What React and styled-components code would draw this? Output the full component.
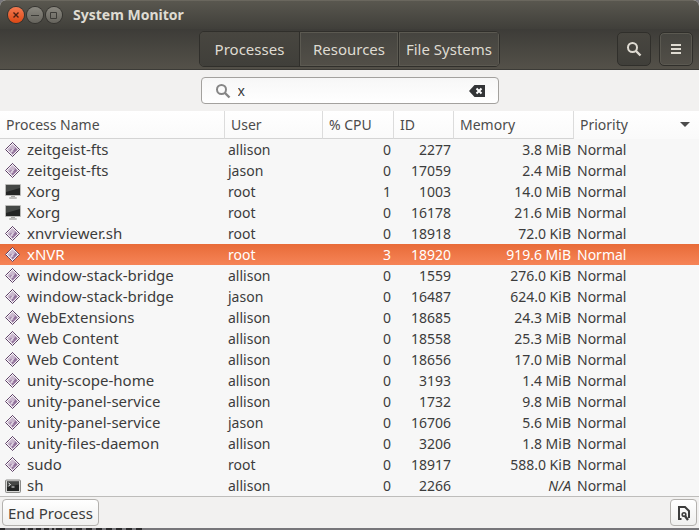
import { useState } from 'react';
import styled, { createGlobalStyle } from 'styled-components';

const processes = [
    { name: 'zeitgeist-fts', user: 'allison', cpu: 0, id: 2277, memory: '3.8 MiB' },
    { name: 'zeitgeist-fts', user: 'jason', cpu: 0, id: 17059, memory: '2.4 MiB' },
    { name: 'Xorg', user: 'root', cpu: 1, id: 1003, memory: '14.0 MiB', icon: 'display' },
    { name: 'Xorg', user: 'root', cpu: 0, id: 16178, memory: '21.6 MiB', icon: 'display' },
    { name: 'xnvrviewer.sh', user: 'root', cpu: 0, id: 18918, memory: '72.0 KiB' },
    { name: 'xNVR', user: 'root', cpu: 3, id: 18920, memory: '919.6 MiB' },
    { name: 'window-stack-bridge', user: 'allison', cpu: 0, id: 1559, memory: '276.0 KiB' },
    { name: 'window-stack-bridge', user: 'jason', cpu: 0, id: 16487, memory: '624.0 KiB' },
    { name: 'WebExtensions', user: 'allison', cpu: 0, id: 18685, memory: '24.3 MiB' },
    { name: 'Web Content', user: 'allison', cpu: 0, id: 18558, memory: '25.3 MiB' },
    { name: 'Web Content', user: 'allison', cpu: 0, id: 18656, memory: '17.0 MiB' },
    { name: 'unity-scope-home', user: 'allison', cpu: 0, id: 3193, memory: '1.4 MiB' },
    { name: 'unity-panel-service', user: 'allison', cpu: 0, id: 1732, memory: '9.8 MiB' },
    { name: 'unity-panel-service', user: 'jason', cpu: 0, id: 16706, memory: '5.6 MiB' },
    { name: 'unity-files-daemon', user: 'allison', cpu: 0, id: 3206, memory: '1.8 MiB' },
    { name: 'sudo', user: 'root', cpu: 0, id: 18917, memory: '588.0 KiB' },
    { name: 'sh', user: 'allison', cpu: 0, id: 2266, memory: null, icon: 'terminal' },
];

const tabs = ['Processes', 'Resources', 'File Systems'];

const SearchIcon = () => (
    <svg width="16" height="16" viewBox="0 0 16 16" fill="none" stroke="currentColor" aria-hidden="true">
        <circle cx="6.5" cy="6.5" r="4.5" strokeWidth="2" />
        <path d="M10 10l4.5 4.5" strokeWidth="2.4" />
    </svg>
);

const ProcessIcon = ({ type }) => {
    if (type === 'display') {
        return (
            <svg width="16" height="16" viewBox="0 0 16 16" aria-hidden="true">
                <rect x="0" y="0" width="16" height="12" rx="1" fill="#b9b9b7" />
                <rect x="1" y="1" width="14" height="10" fill="#242625" />
                <path d="M1 1h14v3L1 8z" fill="#454846" />
                <path d="M6 12h4v2H6z" fill="#a8a8a6" />
                <rect x="4" y="13" width="8" height="2" rx="1" fill="#c0c0be" />
            </svg>
        );
    }
    if (type === 'terminal') {
        return (
            <svg width="16" height="16" viewBox="0 0 16 16" aria-hidden="true">
                <rect x="0.5" y="2" width="15" height="12.5" rx="1" fill="#d6d6d4" stroke="#8a8a88" />
                <rect x="2" y="3.5" width="12" height="9.5" fill="#232524" />
                <path d="M2 3.5h12v3L2 9z" fill="#454745" />
                <path d="M3.5 5l2 1.5-2 1.5M6.5 9h3" fill="none" stroke="#f2f2f2" />
            </svg>
        );
    }
    return (
        <svg width="16" height="16" viewBox="0 0 16 16" aria-hidden="true">
            <path d="M7.5 0.5L14.5 7.5 7.5 14.5 0.5 7.5z" fill="#fff" stroke="#84668c" />
            <path d="M7.5 0.5L14.5 7.5 7.5 14.5 0.5 7.5z" fill="none" stroke="#41254a" strokeDasharray="1 1" />
            <path d="M7.5 2L13 7.5 7.5 13 2 7.5z" fill="#cbb9cf" />
            <path d="M9.5 4.5l3 3-5 5-1-2 2-1-.5-2z" fill="#94749d" />
            <path d="M4 8.5l2-2 1 1-1 2.5z" fill="#a88fb0" />
            <path d="M6 10l1-2 1.5-.5 1-2" fill="none" stroke="#e6dbe9" />
        </svg>
    );
};

const App = () => {
    const [tab, setTab] = useState('Processes');
    const [query, setQuery] = useState('x');
    const [selected, setSelected] = useState(18920);

    return (
        <>
            <GlobalStyle />
            <Window>
                <TitleBar>
                    <WindowButton $close aria-label="Close">
                        <svg width="16" height="16" viewBox="0 0 16 16"><path d="M5.5 5.5l5 5m0-5l-5 5" strokeWidth="1.4" /></svg>
                    </WindowButton>
                    <WindowButton aria-label="Minimize">
                        <svg width="16" height="16" viewBox="0 0 16 16"><path d="M4 8.5h8" /></svg>
                    </WindowButton>
                    <WindowButton aria-label="Maximize">
                        <svg width="16" height="16" viewBox="0 0 16 16"><path d="M4.5 5.5h6v6h-6z" /></svg>
                    </WindowButton>
                    <Title>System Monitor</Title>
                </TitleBar>
                <Toolbar>
                    <Tabs role="tablist">
                        {tabs.map((name) => (
                            <Tab key={name} role="tab" aria-selected={tab === name} $active={tab === name} onClick={() => setTab(name)}>
                                {name}
                            </Tab>
                        ))}
                    </Tabs>
                    <Actions>
                        <ToolButton $active aria-label="Search">
                            <SearchIcon />
                        </ToolButton>
                        <ToolButton aria-label="Menu">
                            <svg width="16" height="16" viewBox="0 0 16 16" fill="currentColor">
                                <path d="M3 3h10v2H3zM3 7h10v2H3zM3 11h10v2H3z" />
                            </svg>
                        </ToolButton>
                    </Actions>
                </Toolbar>
                <SearchBar>
                    <SearchField>
                        <SearchIcon />
                        <SearchInput aria-label="Search processes" value={query} onChange={(e) => setQuery(e.target.value)} />
                        <ClearButton aria-label="Clear" onClick={() => setQuery('')}>
                            <svg width="16" height="12" viewBox="0 0 16 12">
                                <path d="M0 6l5.5-6H16v12H5.5z" fill="#333537" />
                                <path d="M7.5 3.5l5 5m0-5l-5 5" stroke="#fff" strokeWidth="2" />
                            </svg>
                        </ClearButton>
                    </SearchField>
                </SearchBar>
                <Content>
                    <Table>
                        <colgroup>
                            <Col $width={225} />
                            <Col $width={98} />
                            <Col $width={71} />
                            <Col $width={60} />
                            <Col $width={120} />
                            <Col />
                        </colgroup>
                        <thead>
                            <tr>
                                <HeadCell>Process Name</HeadCell>
                                <HeadCell>User</HeadCell>
                                <HeadCell>% CPU</HeadCell>
                                <HeadCell>ID</HeadCell>
                                <HeadCell>Memory</HeadCell>
                                <HeadCell aria-sort="descending">
                                    <SortLabel>
                                        Priority
                                        <svg width="10" height="5" viewBox="0 0 10 5" fill="currentColor" aria-hidden="true"><path d="M0 0h10L5 5z" /></svg>
                                    </SortLabel>
                                </HeadCell>
                            </tr>
                        </thead>
                        <tbody>
                            {processes.map((p) => (
                                <Row key={p.id} $selected={p.id === selected} onClick={() => setSelected(p.id)}>
                                    <Cell>
                                        <ProcessName>
                                            <ProcessIcon type={p.icon} />
                                            {p.name}
                                        </ProcessName>
                                    </Cell>
                                    <Cell>{p.user}</Cell>
                                    <Cell $right>{p.cpu}</Cell>
                                    <Cell $right>{p.id}</Cell>
                                    <Cell $right>{p.memory || <em>N/A</em>}</Cell>
                                    <Cell>Normal</Cell>
                                </Row>
                            ))}
                        </tbody>
                    </Table>
                </Content>
                <Footer>
                    <FooterButton>End Process</FooterButton>
                    <FooterButton $icon aria-label="Process Properties">
                        <svg width="14" height="16" viewBox="0 0 14 16" fill="none" stroke="#3c3c3c" strokeWidth="2">
                            <path d="M4.5 14H2V2h6l4 4v7" />
                            <circle cx="7" cy="9.5" r="1.8" strokeWidth="1.6" />
                            <path d="M8 11l3 4" strokeWidth="2.4" />
                        </svg>
                    </FooterButton>
                </Footer>
            </Window>
            <Backdrop>
                <svg width="144" height="2" viewBox="0 0 144 2" stroke="#2b2a2c" strokeWidth="2" aria-hidden="true">
                    <path d="M0 1h6M20 1h34" strokeDasharray="5 3" />
                    <path d="M56 1h86" strokeDasharray="6 4" />
                </svg>
            </Backdrop>
        </>
    );
};

export default App;

const GlobalStyle = createGlobalStyle`
    * {
        box-sizing: border-box;
    }
    body {
        margin: 0;
        background: #77767a;
    }
    body, button, input {
        font-family: 'Noto Sans', 'Open Sans', sans-serif;
        font-size: 14px;
        line-height: 20px;
        color: #3c3c3c;
    }
    button {
        margin: 0;
        padding: 0;
    }
    svg {
        display: block;
        flex-shrink: 0;
    }
`;

const Window = styled.div`
    display: flex;
    flex-direction: column;
    background: #f2f1f0;
    border-radius: 6px 6px 0 0;
    overflow: hidden;
`;

const TitleBar = styled.div`
    display: flex;
    align-items: center;
    gap: 3px;
    height: 29px;
    padding: 0 8px;
    border-top: 1px solid #6a675e;
    background: linear-gradient(#59574f, #403f3a);
`;

const WindowButton = styled.button`
    display: flex;
    align-items: center;
    justify-content: center;
    width: 16px;
    height: 16px;
    border: none;
    border-radius: 50%;
    background: ${props => props.$close ? 'linear-gradient(#f37a51, #dd4814)' : 'linear-gradient(#8a8880, #66645d)'};
    box-shadow: 0 0 0 1px #34332f;
    svg {
        fill: none;
        stroke: ${props => props.$close ? '#4a2013' : '#3c3b37'};
    }
`;

const Title = styled.span`
    margin-left: 8px;
    font-weight: bold;
    color: #dfdbd2;
`;

const Toolbar = styled.div`
    display: grid;
    grid-template-columns: 1fr auto 1fr;
    align-items: center;
    height: 41px;
    padding: 0 6px;
    border-bottom: 1px solid #3c3b37;
    background: linear-gradient(#3d3c38, #545149);
`;

const Tabs = styled.div`
    display: flex;
    grid-column: 2;
    border: 1px solid #302f2b;
    border-radius: 5px;
    overflow: hidden;
`;

const Tab = styled.button`
    min-width: 99px;
    height: 34px;
    padding: 0 7px;
    border: none;
    font-size: 15px;
    color: #dfdbd2;
    background: ${props => props.$active ? 'linear-gradient(#484640, #403f3a)' : 'linear-gradient(#45443f, #524f48)'};
    box-shadow: ${props => props.$active ? 'none' : 'inset 0 0 0 1px #5b5951'};
    & + & {
        border-left: 1px solid #302f2b;
    }
`;

const Actions = styled.div`
    display: flex;
    grid-column: 3;
    justify-content: flex-end;
    gap: 8px;
`;

const ToolButton = styled.button`
    display: flex;
    align-items: center;
    justify-content: center;
    width: 34px;
    height: 34px;
    border: 1px solid #302f2b;
    border-radius: 5px;
    color: #dfdbd2;
    background: ${props => props.$active ? 'linear-gradient(#484640, #403f3a)' : 'linear-gradient(#45443f, #524f48)'};
    box-shadow: ${props => props.$active ? 'none' : 'inset 0 0 0 1px #5b5951'};
`;

const SearchBar = styled.div`
    display: flex;
    justify-content: center;
    padding: 7px;
`;

const SearchField = styled.div`
    display: flex;
    align-items: center;
    gap: 7px;
    width: 298px;
    height: 27px;
    padding: 0 13px;
    border: 1px solid #a3a19e;
    border-radius: 4px;
    background: linear-gradient(#f7f7f7, #fff);
    color: #868686;
`;

const SearchInput = styled.input`
    flex: 1;
    min-width: 0;
    padding: 0;
    border: none;
    outline: none;
    background: none;
`;

const ClearButton = styled.button`
    border: none;
    background: none;
`;

const Content = styled.div`
    background: #f7f7f7;
    border-bottom: 1px solid #bebdbb;
`;

const Table = styled.table`
    width: 100%;
    table-layout: fixed;
    border-collapse: separate;
    border-spacing: 0;
`;

const Col = styled.col`
    width: ${props => props.$width ? `${props.$width}px` : 'auto'};
`;

const HeadCell = styled.th`
    height: 28px;
    padding: 0 6px;
    border-right: 1px solid #dcdcdc;
    border-bottom: 1px solid #d4d4d4;
    background: linear-gradient(#fff, #fafafa);
    font-weight: normal;
    text-align: left;
    white-space: nowrap;
    color: #4c4c4c;
    &:last-child {
        border-right: none;
        border-bottom-color: #fafafa;
    }
`;

const SortLabel = styled.div`
    display: flex;
    align-items: center;
    justify-content: space-between;
    padding-right: 3px;
`;

const Row = styled.tr`
    color: ${props => props.$selected ? '#fff' : '#3c3c3c'};
    background: ${props => props.$selected ? 'linear-gradient(#e86b38, #f68457)' : 'none'};
`;

const Cell = styled.td`
    height: 21px;
    padding: 0 3px;
    white-space: nowrap;
    text-align: ${props => props.$right ? 'right' : 'left'};
`;

const ProcessName = styled.div`
    display: flex;
    align-items: center;
    gap: 6px;
    padding-left: 2px;
    font-size: 15px;
    line-height: 19px;
`;

const Footer = styled.div`
    display: flex;
    justify-content: space-between;
    align-items: center;
    height: 31px;
    padding: 0 2px;
`;

const FooterButton = styled.button`
    display: flex;
    align-items: center;
    justify-content: center;
    width: ${props => props.$icon ? '27px' : 'auto'};
    height: 27px;
    padding: 0 5px;
    border: 1px solid #b3b1ae;
    border-radius: 4px;
    background: linear-gradient(#fff, #f0f0ef);
    font-size: 15px;
`;

const Backdrop = styled.div`
    overflow: hidden;
    background: #77767a;
`;
